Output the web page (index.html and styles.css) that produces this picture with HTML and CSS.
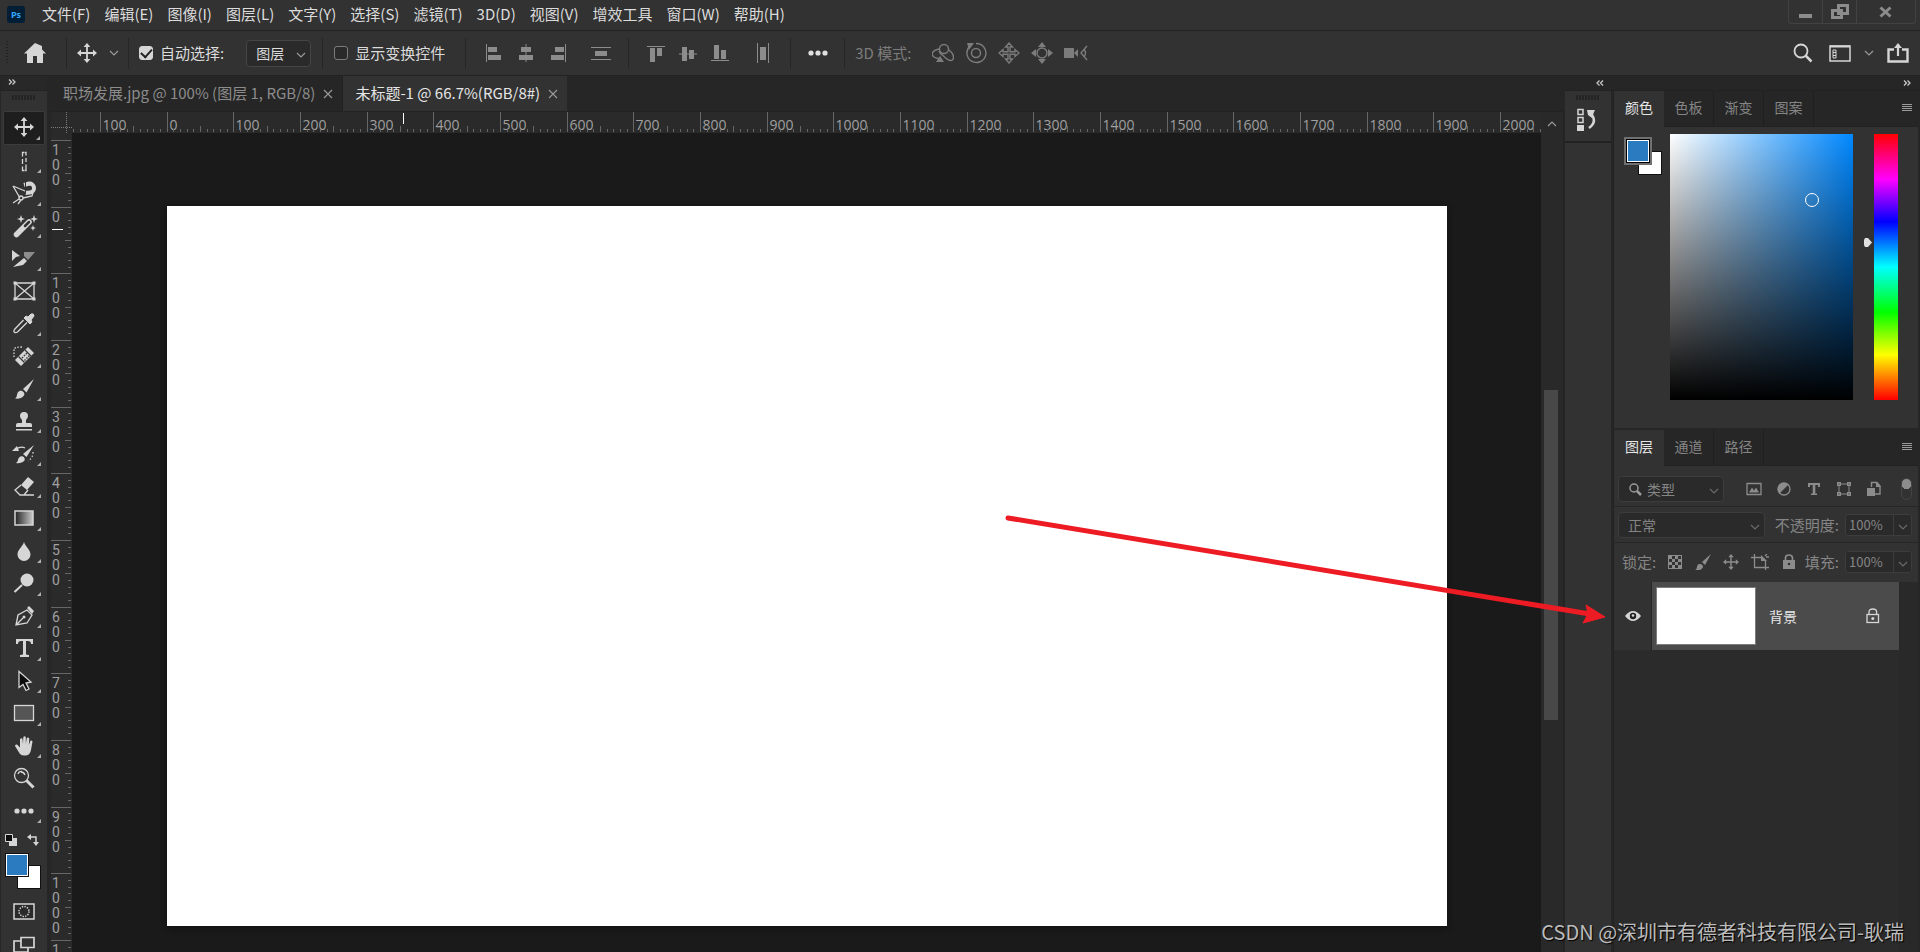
FILE: index.html
```html
<!DOCTYPE html>
<html lang="zh-CN">
<head>
<meta charset="utf-8">
<title>未标题-1</title>
<link rel="stylesheet" href="styles.css">
</head>
<body>
<svg class="defs" aria-hidden="true">
  <symbol id="i-chev" viewBox="0 0 10 10"><path d="M1 3l4 4 4-4" fill="none" stroke="currentColor" stroke-width="1.2"/></symbol>
  <symbol id="i-move" viewBox="0 0 20 20"><path d="M10 2v16M2 10h16" stroke="currentColor" stroke-width="1.8"/><path d="M10 0l3.400 4H6.600zM10 20l3.400-4H6.600zM0 10l4-3.400v6.800zM20 10l-4-3.400v6.800z" fill="currentColor"/></symbol>
  <symbol id="i-x" viewBox="0 0 10 10"><path d="M1 1l8 8M9 1l-8 8" stroke="currentColor" stroke-width="1.100"/></symbol>
  <symbol id="i-menu" viewBox="0 0 10 8"><path d="M0 .5h10M0 2.500h10M0 4.500h10M0 6.500h10" stroke="currentColor"/></symbol>
  <symbol id="i-dbl" viewBox="0 0 8 6"><path d="M1 .5L3.500 3 1 5.500M4.500.5L7 3 4.500 5.500" fill="none" stroke="currentColor" stroke-width="1.300"/></symbol>
  <symbol id="i-dots" viewBox="0 0 20 6"><g fill="currentColor"><circle cx="3" cy="3" r="2.600"/><circle cx="10" cy="3" r="2.600"/><circle cx="17" cy="3" r="2.600"/></g></symbol>
</svg>

<div class="app">
  <header class="menubar">
    <svg class="logo" viewBox="0 0 18 17"><rect width="18" height="17" rx="3" fill="#001e36"/><text x="9" y="12" text-anchor="middle" class="logo-text">Ps</text></svg>
    <nav class="menus">
      <button>文件(F)</button><button>编辑(E)</button><button>图像(I)</button><button>图层(L)</button><button>文字(Y)</button><button>选择(S)</button><button>滤镜(T)</button><button>3D(D)</button><button>视图(V)</button><button>增效工具</button><button>窗口(W)</button><button>帮助(H)</button>
    </nav>
    <div class="winctl">
      <button aria-label="最小化"><svg width="13" height="18"><rect y="11" width="13" height="4" fill="#8c8c8c"/></svg></button>
      <button aria-label="还原"><svg width="18" height="18"><path d="M7.500 2.500h9v8h-9zM1.500 7.500h9v7h-9z" fill="#323232" stroke="#8c8c8c" stroke-width="3"/></svg></button>
      <button class="wide" aria-label="关闭"><svg width="14" height="18"><path d="M1.500 4.500l10 9M11.500 4.500l-10 9" stroke="#8c8c8c" stroke-width="3"/></svg></button>
    </div>
  </header>

  <section class="options">
    <div class="grp g-home"><i class="grip-v"></i><button aria-label="主页"><svg width="22" height="20"><path d="M11 0L0 10.500h3V20h6v-7h4v7h6v-9.500h3L18 6.500V3z" fill="#d6d6d6"/></svg></button></div>
    <div class="grp g-tool"><svg class="ic20"><use href="#i-move"/></svg><svg class="ic10"><use href="#i-chev"/></svg></div>
    <div class="grp g-auto">
      <label class="check"><input type="checkbox" checked><span>自动选择:</span></label>
      <span class="sel sel-auto"><select aria-label="自动选择对象"><option>图层</option></select><svg class="ic10"><use href="#i-chev"/></svg></span>
    </div>
    <div class="grp g-show"><label class="check"><input type="checkbox"><span>显示变换控件</span></label></div>
    <div class="grp g-align">
      <button aria-label="左对齐"><svg class="ic20"><path d="M2.500 1v18" stroke="#8c8c8c"/><path d="M4 4h9v5H4zM4 12h13v5H4z"/></svg></button>
      <button aria-label="水平居中对齐"><svg class="ic20"><path d="M10 1v18" stroke="#8c8c8c"/><path d="M5 4h10v5H5zM3 12h14v5H3z"/></svg></button>
      <button aria-label="右对齐"><svg class="ic20"><path d="M17.500 1v18" stroke="#8c8c8c"/><path d="M7 4h9v5H7zM3 12h13v5H3z"/></svg></button>
      <button class="apart" aria-label="垂直分布"><svg class="ic20"><path d="M0 4.500h20M0 16.500h20" stroke="#8c8c8c"/><path d="M4 8h12v5H4z"/></svg></button>
    </div>
    <div class="grp g-align g-align2">
      <button aria-label="顶对齐"><svg class="ic20"><path d="M1 3.500h18" stroke="#8c8c8c"/><path d="M4 5h5v14H4zM11 5h5v8h-5z"/></svg></button>
      <button aria-label="垂直居中对齐"><svg class="ic20"><path d="M1 11h18" stroke="#8c8c8c"/><path d="M4 4h5v14H4zM11 7h5v9h-5z"/></svg></button>
      <button aria-label="底对齐"><svg class="ic20"><path d="M1 17.500h18" stroke="#8c8c8c"/><path d="M4 2h5v14H4zM11 7h5v9h-5z"/></svg></button>
      <button class="apart" aria-label="水平分布"><svg class="ic20"><path d="M4.500 0v20M15.500 0v20" stroke="#8c8c8c"/><path d="M7 4h6v13H7z"/></svg></button>
    </div>
    <div class="grp g-more"><button aria-label="更多"><svg width="20" height="6"><use href="#i-dots"/></svg></button></div>
    <div class="grp g-3d">
      <span class="mode">3D 模式:</span>
      <svg class="ic22 line"><circle cx="12" cy="7" r="4.500"/><path d="M7.500 7C1 8-2 12 2 15c1.500 1 3 1.500 5 1.500M16.500 7.500c5 4 6 8 4 10.500-2 1.500-6-1-9-4-3-2-4-3-4.500-5"/><path class="solid" d="M8 14l4 6H4z"/></svg>
      <svg class="ic22 line"><circle cx="11" cy="11" r="4.500"/><path d="M5 4a9.500 9.500 0 1 0 6-2.500"/><path class="solid" d="M2 1l7 0-5 7z"/></svg>
      <svg class="ic22 line"><path d="M11 1l3.500 4H12v4.800h5V7.500l4 3.500-4 3.500v-2.300h-5V17h2.500L11 21l-3.500-4H10v-4.800H5v2.300L1 11l4-3.500v2.300h5V5H7.500z"/></svg>
      <svg class="ic22 line"><circle cx="11" cy="11" r="5"/><path class="solid" d="M11 0l4 5H7zM11 22l4-5H7zM0 11l5-4v8zM22 11l-5-4v8z"/></svg>
      <svg class="ic24 line"><path class="solid" d="M0 6h10v10H0zM10 11l4-4v8z"/><path d="M23 4l-6 7 6 7M20 7q3 4 0 8"/></svg>
    </div>
    <div class="right-tools">
      <button aria-label="搜索"><svg width="20" height="20"><circle cx="8" cy="8" r="6.500" fill="none" stroke="#d6d6d6" stroke-width="1.800"/><path d="M12.500 12.500l6 6" stroke="#d6d6d6" stroke-width="2.500"/></svg></button>
      <button class="ws" aria-label="工作区"><svg width="22" height="18"><rect x="1" y="2" width="20" height="15" fill="none" stroke="#d6d6d6" stroke-width="1.500"/><path d="M1 2.500h20" stroke="#d6d6d6" stroke-width="2"/><path d="M4 6h3v8H4zM4 8.500h3M4 11.500h3" fill="none" stroke="#d6d6d6"/></svg></button>
      <svg class="ic10"><use href="#i-chev"/></svg>
      <button class="share" aria-label="共享"><svg width="22" height="20"><path d="M7 6.500H1.500v12h19v-12H15" fill="none" stroke="#d6d6d6" stroke-width="2.400"/><path d="M11 13V3" stroke="#d6d6d6" stroke-width="2.200"/><path d="M11 0l4 5H7z" fill="#d6d6d6"/></svg></button>
    </div>
  </section>

  <main class="work">
    <aside class="toolbox">
      <div class="dock-head left"><svg width="8" height="6"><use href="#i-dbl"/></svg></div>
      <div class="grip"></div>
      <div class="tools">
        <button class="on" aria-label="移动"><svg viewBox="0 0 40 32"><use href="#i-move" x="10" y="5" width="20" height="20"/></svg></button>
        <button aria-label="单列选框"><svg viewBox="0 0 40 32"><path d="M20 7.500h-1.500v4M18.500 14v5M18.500 21.500v4H20M20.500 7.500h1.500v3M22 13v4M22 19.500v6h-1.500" class="s"/></svg></button>
        <button aria-label="磁性套索"><svg viewBox="0 0 40 32"><path d="M9 8l7 12M9 8l12 5M19 20l9-2 1-4M15 21l-6 4M17 22l-3 4" class="s"/><circle cx="17" cy="20" r="2" class="s"/><path d="M20 7l5-1.500a4.500 4.500 0 0 1 1 9l-5 .5" fill="none" stroke="#d6d6d6" stroke-width="4"/><path d="M21.500 4v5M21.500 12.500v4" stroke="#323232"/></svg></button>
        <button aria-label="魔棒"><svg viewBox="0 0 40 32"><path d="M12.500 24.500L25 12" stroke="#d6d6d6" stroke-width="5.500" stroke-linecap="round"/><path d="M21 16l4-4" stroke="#323232" stroke-width="2.500" stroke-linecap="round"/><path d="M17 5l1 3 3 1-3 1-1 3-1-3-3-1 3-1zM30 5l1 3 3 1-3 1-1 3-1-3-3-1 3-1zM29 15l.8 2.200 2.200.8-2.200.8L29 21l-.8-2.200L26 18l2.200-.8z"/></svg></button>
        <button aria-label="切片选择"><svg viewBox="0 0 40 32"><path d="M8 7l8 6-4 1-4 4zM9 24l11-9 3 3-4 4z"/><path d="M20 9h11l-7 8-4-4z" fill="#8c8c8c"/></svg></button>
        <button aria-label="图框"><svg viewBox="0 0 40 32" class="nt"><path d="M11 8h19v16H11zM11 8l19 16M30 8L11 24" class="s"/><path d="M9.500 6.500h3v3h-3zM28.500 6.500h3v3h-3zM9.500 22.500h3v3h-3zM28.500 22.500h3v3h-3z"/></svg></button>
        <button aria-label="吸管"><svg viewBox="0 0 40 32"><path d="M23 14.500l-9 9q-1 1.500-3 1t-.5-3l9-9.500" class="s" stroke-width="2"/><path d="M20 10l2-2 2 1 3-3q3-1 3 2l-3 4 1 2-2 2z" stroke="#d6d6d6"/></svg></button>
        <button aria-label="修复画笔"><svg viewBox="0 0 40 32"><path d="M10 17V9q1-2 8-2" class="s" stroke-dasharray="1.500 1.500"/><path d="M14 23L27 10" stroke="#d6d6d6" stroke-width="8.500"/><path d="M14.500 16.500l6 6M21 10l6 6" stroke="#323232" stroke-width="1.200"/><path d="M18 18l5-5M20.500 20.500l5-5" stroke="#323232" stroke-width="1.500" stroke-dasharray="1.500 1.200"/></svg></button>
        <button aria-label="画笔"><svg viewBox="0 0 40 32"><path d="M30 6L19 16l3.500 3.500zM11 25.500c3-1.500 1-6 4.500-7.500 3-1 6 2 4.500 4.500-2 3-6 3.500-9 3z"/></svg></button>
        <button aria-label="仿制图章"><svg viewBox="0 0 40 32"><path d="M16 11a4 4 0 1 1 8 0q0 2-2 4v3h4q2 0 2 2v2H12v-2q0-2 2-2h4v-3q-2-2-2-4zM12 24h16v1.500H12z"/></svg></button>
        <button aria-label="历史记录画笔"><svg viewBox="0 0 40 32"><path d="M30 7L19 16l3.500 3zM12 25c3-1.500 1-5 4.500-6.500 3-1 5 2 4 4-2 2.500-5.500 3-8.500 2.500zM8 13l5-5 2 5z"/><path d="M12 11q5-3 9-1" class="s"/><path d="M29 14q0 6-5 9" class="s" stroke-dasharray="1.500 2"/></svg></button>
        <button aria-label="橡皮擦"><svg viewBox="0 0 40 32"><path d="M17 15l7-8 6 5-7 8z"/><path d="M17 15l-6 5 5 5h4l4-5M16 25h14" class="s"/></svg></button>
        <button aria-label="渐变"><svg viewBox="0 0 40 32"><defs><linearGradient id="gt"><stop stop-color="#222"/><stop offset="1" stop-color="#ccc"/></linearGradient></defs><rect x="11" y="9" width="18" height="14" fill="url(#gt)" stroke="#d6d6d6" stroke-width="1.500"/></svg></button>
        <button aria-label="模糊"><svg viewBox="0 0 40 32"><path d="M20 7c1 4 6.500 7.500 6.500 12.500a6.500 6.500 0 0 1-13 0C13.500 14.500 19 11 20 7z"/></svg></button>
        <button aria-label="减淡"><svg viewBox="0 0 40 32"><circle cx="23" cy="13" r="6.500"/><path d="M18 18l-7.500 7" stroke="#d6d6d6" stroke-width="2"/></svg></button>
        <button aria-label="钢笔"><svg viewBox="0 0 40 32"><path d="M12 25l2-10 9-5 5 5-5 8zM12 25l7-7" class="s" stroke-width="1.500"/><path d="M23 8l2-2 5 5-2 3z"/><circle cx="20" cy="17" r="1.500"/></svg></button>
        <button aria-label="文字"><svg viewBox="0 0 40 32"><path d="M12 7h17v5h-2q0-3-3-3h-2v13q0 1 3 1v2h-9v-2q3 0 3-1V9h-2q-3 0-3 3h-2z"/></svg></button>
        <button aria-label="路径选择"><svg viewBox="0 0 40 32"><path d="M15 6.500v16l4-3 3 6 3-1.500-3-6 5-1z" fill="#0c0c0c" stroke="#d6d6d6" stroke-width="1.300"/></svg></button>
        <button aria-label="矩形"><svg viewBox="0 0 40 32"><rect x="10.500" y="8.500" width="19" height="15" fill="#555" stroke="#d6d6d6" stroke-width="1.300"/></svg></button>
        <button aria-label="抓手"><svg viewBox="0 0 40 32"><path d="M16 24l-5-8q0-2 2-1.500l3 3V9q1.500-1.500 2.500 0l.5 5 .3-7q1.200-1.500 2.500 0v7l1-6q1.500-1.200 2.500.5l-.5 6.500 1.500-4q1.500-1 2.200.5L27 20q-1 5-5 5.500-4 .5-6-1.500z"/></svg></button>
        <button aria-label="缩放"><svg viewBox="0 0 40 32" class="nt"><circle cx="17.500" cy="13.500" r="7" class="s" stroke-width="1.700"/><path d="M14 12q1-3 4-2.500M17 10q3 0 4 3" class="s"/><path d="M22.500 18.500l7 7" stroke="#d6d6d6" stroke-width="3"/></svg></button>
        <button aria-label="编辑工具栏"><svg viewBox="0 0 40 32"><use href="#i-dots" x="10" y="13" width="20" height="6"/></svg></button>
      </div>
      <div class="toolfoot">
        <div class="mini">
          <svg width="12" height="12"><path d="M4 4h8v8H4z" fill="#d6d6d6"/><path d="M.5.5h7v7h-7z" fill="#0c0c0c" stroke="#d6d6d6"/></svg>
          <svg width="12" height="12"><path d="M3 3h6v6" fill="none" stroke="#d6d6d6" stroke-width="1.500"/><path d="M0 3l4-3v6zM9 12L6 8h6z" fill="#d6d6d6"/></svg>
        </div>
        <div class="swatches"><i class="back"></i><i class="fore"></i></div>
        <button aria-label="快速蒙版"><svg width="22" height="18"><rect x="1" y="1" width="20" height="15" fill="#2a2a2a" stroke="#d6d6d6" stroke-width="1.500"/><circle cx="11" cy="8.500" r="5" fill="none" stroke="#d6d6d6" stroke-width="1.500" stroke-dasharray="1.300 1.300"/></svg></button>
        <button aria-label="屏幕模式"><svg width="22" height="18"><path d="M8 5H1v11h14v-4M8 1.500h13v10H8z" fill="none" stroke="#d6d6d6" stroke-width="1.700"/></svg></button>
      </div>
    </aside>

    <section class="document">
      <div class="doctabs">
        <div class="doctab t1"><a href="#">职场发展.jpg @ 100% (图层 1, RGB/8)</a><button aria-label="关闭标签"><svg class="ic10"><use href="#i-x"/></svg></button></div>
        <div class="doctab on"><a href="#">未标题-1 @ 66.7%(RGB/8#)</a><button aria-label="关闭标签"><svg class="ic10"><use href="#i-x"/></svg></button></div>
      </div>
      <div class="view">
        <div class="corner"></div>
        <svg class="ruler-h" id="ruler-h"></svg>
        <svg class="ruler-v" id="ruler-v"></svg>
        <div class="stage"><div class="artboard"></div></div>
        <div class="scroll">
          <svg class="ic10 up"><use href="#i-chev"/></svg>
          <i class="thumb"></i>
        </div>
      </div>
    </section>

    <div class="docks">
      <div class="dockbar">
        <svg class="flip" width="8" height="6"><use href="#i-dbl"/></svg>
        <svg width="8" height="6"><use href="#i-dbl"/></svg>
      </div>
      <div class="dockrow">
        <aside class="strip">
          <div class="grip"></div>
          <button aria-label="历史记录"><svg width="20" height="23"><path d="M1 1.500h5v5H1zM1 9.500h5v5H1z" fill="none" stroke="#d6d6d6" stroke-width="1.500"/><path d="M0 17h7v6H0z" fill="#d6d6d6"/><path d="M12 20q8-6 3-13" fill="none" stroke="#d6d6d6" stroke-width="2.500"/><path d="M10 2h8l-1 2-2 6-4-3z" fill="#d6d6d6"/></svg></button>
        </aside>
        <aside class="panels">
          <section class="panel">
            <div class="ptabs"><button class="on">颜色</button><button>色板</button><button>渐变</button><button>图案</button><svg class="pmenu"><use href="#i-menu"/></svg></div>
            <div class="color">
              <div class="cswatch"><i class="back"></i><i class="fore"></i></div>
              <div class="field"><i class="ring"></i></div>
              <div class="hue"><svg class="mark" width="9" height="9"><path d="M1 0h3l4 4.500L4 9H1L0 7V2z" fill="#e0e0e0"/></svg></div>
            </div>
          </section>
          <section class="panel layers">
            <div class="ptabs"><button class="on">图层</button><button>通道</button><button>路径</button><svg class="pmenu"><use href="#i-menu"/></svg></div>
            <div class="lrow r-filter">
              <span class="sel sel-kind"><svg class="lens" width="13" height="13"><circle cx="5" cy="5" r="4" fill="none" stroke="#9a9a9a" stroke-width="1.500"/><path d="M8 8l4 4" stroke="#9a9a9a" stroke-width="2.500"/></svg><select aria-label="筛选类型"><option>类型</option></select><svg class="ic10"><use href="#i-chev"/></svg></span>
              <div class="filters">
                <svg class="ic16"><path d="M1 2.500h14v11H1z" fill="none" stroke="#8c8c8c" stroke-width="1.300"/><path d="M3 11.500l3-5 2 3 2-3 3 5z"/></svg>
                <svg class="ic16"><circle cx="8" cy="8" r="6" fill="none" stroke="#8c8c8c" stroke-width="1.300"/><path d="M12.500 3.500l-9 9A6 6 0 0 1 12.500 3.500z"/></svg>
                <svg class="ic16"><path d="M2 2h12v4h-2V4H9.300v8.500H11V14H5v-1.500h1.700V4H4v2H2z"/></svg>
                <svg class="ic16"><path d="M3 3h10v10H3z" fill="none" stroke="#8c8c8c"/><path d="M1 1h4v4H1zM11 1h4v4h-4zM1 11h4v4H1zM11 11h4v4h-4z"/><path d="M2.500 2.500h1v1h-1zM12.500 2.500h1v1h-1zM2.500 12.500h1v1h-1zM12.500 12.500h1v1h-1z" fill="#323232"/></svg>
                <svg class="ic16"><path d="M5.500 6V1.500H11L14 5v8H9" fill="none" stroke="#8c8c8c" stroke-width="1.400"/><path d="M10 1v5h5zM1 7h8v8H1z"/></svg>
              </div>
              <input class="toggle" type="checkbox" role="switch" aria-label="打开滤镜">
            </div>
            <div class="lrow r-blend">
              <span class="sel sel-blend"><select aria-label="混合模式"><option>正常</option></select><svg class="ic10"><use href="#i-chev"/></svg></span>
              <label for="op">不透明度:</label>
              <span class="num"><input id="op" value="100%"><button aria-label="不透明度滑块"><svg class="ic10"><use href="#i-chev"/></svg></button></span>
            </div>
            <div class="lrow r-lock">
              <span>锁定:</span>
              <div class="locks">
                <svg class="ic16"><path d="M1 1h14v14H1z"/><path d="M5 2h3v3H5zM11 2h3v3h-3zM2 5h3v3H2zM8 5h3v3H8zM5 8h3v3H5zM11 8h3v3h-3zM2 11h3v3H2zM8 11h3v3H8z" fill="#323232"/></svg>
                <svg class="ic16"><path d="M16 0L7 8l3 3zM0 16c3-1 1-5 4-6 3-.5 5 2 3.500 4S3 17 0 16z"/></svg>
                <svg class="ic16 mv"><use href="#i-move"/></svg>
                <svg class="ic18"><path d="M3.500 0v13.500H18M0 3.500h11l3.500 3V16M15 3h3M16 0l-2 2" fill="none" stroke="#8c8c8c" stroke-width="1.300"/><path d="M3 14.500v1.500M10 1l6 6h-6z"/></svg>
                <svg class="ic16 lk"><path d="M2 6h12v9H2z"/><path d="M4.500 7V4q0-3 3.500-3t3.500 3v3" fill="none" stroke="#8c8c8c" stroke-width="1.700"/><circle cx="8" cy="10" r="1.300" fill="#323232"/></svg>
              </div>
              <label for="fl">填充:</label>
              <span class="num"><input id="fl" value="100%"><button aria-label="填充滑块"><svg class="ic10"><use href="#i-chev"/></svg></button></span>
            </div>
            <div class="llist">
              <div class="layer">
                <button class="eye" aria-label="可见性"><svg width="16" height="10"><path d="M0 5q8-10 16 0-8 10-16 0z" fill="#d6d6d6"/><circle cx="8" cy="5" r="3.200" fill="#222"/><circle cx="8" cy="4.500" r="1.300" fill="#d6d6d6"/></svg></button>
                <div class="linfo"><i class="lthumb"></i><span>背景</span><svg width="14" height="16"><rect x="1" y="6.500" width="11.500" height="8" fill="none" stroke="#d6d6d6" stroke-width="1.300"/><path d="M3 6.500V4q0-3 3.800-3t3.800 3v2.500" fill="none" stroke="#d6d6d6" stroke-width="1.300"/><circle cx="6.800" cy="10.500" r="1.500" fill="#d6d6d6"/></svg></div>
              </div>
              <div class="lscroll"></div>
            </div>
          </section>
        </aside>
      </div>
    </div>
  </main>

  <svg class="arrow" width="606" height="112"><path d="M3 5L585 101" stroke="#ed1c24" stroke-width="5" stroke-linecap="round"/><path d="M600 104l-22 6 5-9-2-9z" fill="#ed1c24" stroke="#ed1c24"/></svg>
  <p class="credit">CSDN @深圳市有德者科技有限公司-耿瑞</p>
</div>
<script src="rulers.js"></script>
</body>
</html>
```

FILE: rulers.js
```js
// Draws both rulers: 100 document pixels are 200/3 screen pixels at 66.7% zoom.
const STEP = 200 / 30;

function line(x1, y1, x2, y2, cls) {
  return `<path class="${cls}" d="M${x1} ${y1}L${x2} ${y2}"/>`;
}

function drawHorizontal(el, origin) {
  const width = el.clientWidth;
  let out = '';
  for (let n = -14; origin + n * STEP < width; n++) {
    const x = Math.floor(origin + n * STEP) + 0.5;
    const top = n % 10 === 0 ? 0 : n % 5 === 0 ? 14 : 17;
    out += line(x, top, x, 20, 'tick');
    if (n % 10 === 0) out += `<text x="${x + 2}" y="18">${Math.abs(n * 10)}</text>`;
  }
  el.innerHTML = out + line(331.5, 1, 331.5, 12, 'cursor');
}

function drawVertical(el, origin) {
  const height = el.clientHeight;
  let out = '';
  for (let n = -10; origin + n * STEP < height; n++) {
    const y = Math.floor(origin + n * STEP) + 0.5;
    const left = n % 10 === 0 ? 0 : n % 5 === 0 ? 14 : 17;
    out += line(left, y, 20, y, 'tick');
    if (n % 10 === 0) {
      [...String(Math.abs(n * 10))].forEach((d, i) => {
        const base = y + 14 + i * 15;
        if (base - 10 < height) out += `<text x="1" y="${base}">${d}</text>`;
      });
    }
  }
  el.innerHTML = out + line(1, 96.5, 12, 96.5, 'cursor');
}

function draw() {
  drawHorizontal(document.getElementById('ruler-h'), 95);
  drawVertical(document.getElementById('ruler-v'), 74);
}

draw();
window.addEventListener('resize', draw);
```

FILE: styles.css
```css
* { box-sizing: border-box; }
body {
  margin: 0;
  background: #1a1a1a;
  color: #dcdcdc;
  font: 14px/20px "Noto Sans CJK SC", sans-serif;
}
button, select, input { font: inherit; color: inherit; margin: 0; padding: 0; border: 0; background: none; }
button { display: flex; align-items: center; justify-content: center; }
a { color: inherit; text-decoration: none; }
svg { display: block; flex: none; }
i { display: block; }
.defs { width: 0; height: 0; position: absolute; }
.ic10 { width: 10px; height: 10px; color: #9a9a9a; }
.ic16 { width: 16px; height: 16px; fill: #8c8c8c; color: #8c8c8c; }
.ic18 { width: 18px; height: 16px; fill: #8c8c8c; }
.ic20 { width: 20px; height: 20px; fill: #8c8c8c; color: #d6d6d6; }
.ic22 { width: 22px; height: 22px; }
.ic24 { width: 24px; height: 22px; }
.line { fill: none; stroke: #7c7c7c; stroke-width: 1.4; }
.solid { fill: #7c7c7c; stroke: none; }

.app { position: relative; height: 100vh; display: flex; flex-direction: column; overflow: hidden; }

/* menu bar */
.menubar { height: 31px; flex: none; display: flex; background: #323232; border-bottom: 1px solid #222; padding: 0 4px 0 7px; }
.logo { width: 18px; height: 17px; margin-top: 6px; }
.logo-text { font: bold 9px "Open Sans", sans-serif; fill: #31a8ff; }
.menus { display: flex; gap: 14px; padding-left: 17px; font-size: 15px; height: 28px; flex: 1; }
.menus button { white-space: nowrap; }
.winctl { display: flex; height: 24px; border: 1px solid #424242; border-top: 0; border-radius: 0 0 4px 4px; }
.winctl button { width: 34px; border-right: 1px solid #424242; }
.winctl .wide { width: 58px; border-right: 0; }

/* options bar */
.options { height: 45px; flex: none; display: flex; align-items: center; background: #323232; border-bottom: 1px solid #222; font-size: 15px; }
.grp { display: flex; align-items: center; height: 31px; border-right: 1px solid #262626; }
.grip-v { width: 2px; height: 24px; margin: 0 16px 0 6px; background: repeating-linear-gradient(#222 0 1px, transparent 1px 3px); }
.g-home { padding-right: 20px; }
.g-tool { padding: 0 9px 0 10px; gap: 12px; }
.g-auto { padding: 0 11px 0 10px; gap: 22px; }
.g-show { padding: 0 20px 0 11px; }
.g-align { padding: 0 17px 0 18px; gap: 12px; }
.g-align2 { padding-left: 17px; }
.apart { margin-left: 11px; }
.g-more { padding: 0 16px 0 17px; color: #e0e0e0; }
.g-3d { border: 0; padding-left: 10px; gap: 11px; color: #7c7c7c; }
.mode { margin-right: 10px; }
.check { display: flex; align-items: center; gap: 7px; }
.check input { appearance: none; width: 14px; height: 14px; border: 1px solid #7c7c7c; border-radius: 3px; background: #2a2a2a; }
.check input:checked { background: #d6d6d6; border-color: #d6d6d6; display: grid; place-items: center; }
.check input:checked::after { content: ""; width: 9px; height: 5px; border: solid #222; border-width: 0 0 2px 2px; transform: rotate(-48deg) translate(1px, -1px); }
.sel { display: grid; align-items: center; background: #2a2a2a; border: 1px solid #454545; border-radius: 4px; font-size: 14px; }
.sel > * { grid-area: 1 / 1; }
.sel select { appearance: none; width: 100%; padding-left: 9px; }
.sel option { background: #2a2a2a; }
.sel .ic10 { justify-self: end; margin: 4px 4px 0 0; pointer-events: none; }
.sel-auto { width: 65px; height: 27px; }
.right-tools { margin-left: auto; display: flex; align-items: center; padding-right: 11px; gap: 13px; }
.ws { margin-left: 3px; }

/* work area */
.work { flex: 1; min-height: 0; display: flex; background: #262626; }
.toolbox { width: 48px; flex: none; background: #323232; border-left: 1px solid #262626; border-right: 1px solid #262626; display: flex; flex-direction: column; }
.dock-head { height: 15px; background: #282828; border-bottom: 1px solid #222; color: #c8c8c8; padding: 3px 0 0 7px; }
.grip { width: 24px; height: 5px; margin: 4px auto 0; background: repeating-linear-gradient(90deg, #242424 0 2px, transparent 2px 3px); }
.toolbox .grip { margin: 4px 0 11px 11px; }
.tools { flex: 1; min-height: 0; display: grid; grid-auto-rows: 1fr; padding: 0 4px 0 2px; color: #d6d6d6; }
.tools button { position: relative; }
.tools button::after { content: ""; position: absolute; right: 4px; bottom: 4px; border: 2px solid; border-color: transparent #b0b0b0 #b0b0b0 transparent; }
.tools button:has(.nt)::after { display: none; }
.tools svg { width: 40px; height: 32px; fill: #d6d6d6; }
.tools .s { fill: none; stroke: #d6d6d6; stroke-width: 1.3; }
.tools .on { background: #1e1e1e; border: 1px solid #3c3c3c; border-radius: 2px; }
.toolfoot { height: 125px; flex: none; display: flex; flex-direction: column; padding: 7px 5px 0 4px; }
.toolfoot > * { flex: none; }
.mini { display: flex; gap: 10px; }
.swatches { position: relative; width: 36px; height: 36px; margin: 7px 0 14px; }
.fore, .back { position: absolute; width: 24px; height: 24px; border: 1px solid #111; }
.fore { left: 0; top: 0; background: #2b7bc1; box-shadow: inset 0 0 0 1px #fff; }
.back { right: 0; bottom: 0; background: #fff; }
.toolfoot button { align-self: flex-start; margin: 0 0 15px 8px; }

.document { flex: 1; min-width: 0; margin-left: 3px; display: flex; flex-direction: column; }
.doctabs { height: 36px; flex: none; display: flex; border-bottom: 1px solid #222; white-space: nowrap; font-size: 15px; }
.doctab { display: flex; align-items: center; gap: 8px; padding: 0 9px 0 12px; color: #8c8c8c; }
.doctab.on { background: #323232; color: #e6e6e6; border-left: 1px solid #222; }
.doctab a { padding-bottom: 2px; }
.view { flex: 1; min-height: 0; display: grid; grid-template: 21px minmax(0, 1fr) / 21px minmax(0, 1fr) 23px; }
.corner { background: #2a2a2a; position: relative; }
.corner::before, .corner::after { content: ""; position: absolute; }
.corner::before { left: 15px; top: 0; height: 21px; border-left: 1px dotted #7c7c7c; }
.corner::after { top: 15px; left: 0; width: 21px; border-top: 1px dotted #7c7c7c; }
.ruler-h, .ruler-v { width: 100%; height: 100%; overflow: hidden; background: #2a2a2a; font: 14px "Open Sans", sans-serif; fill: #a0a0a0; }
.ruler-v { grid-area: 2 / 1; font-family: Roboto, sans-serif; }
.tick { stroke: #666; }
.cursor { stroke: #fff; }
.stage { grid-area: 2 / 2; background: #1a1a1a; padding: 73px 94px 0 95px; overflow: hidden; }
.artboard { background: #fff; aspect-ratio: 16 / 9; box-shadow: 0 2px 5px #111; }
.scroll { grid-area: 1 / 3 / 3 / 4; background: #292929; border-right: 1px solid #222; padding: 7px 5px 0 3px; display: flex; flex-direction: column; }
.up { transform: rotate(180deg); margin-left: 3px; }
.thumb { flex: 1; margin: 261px 0 232px; background: #484848; }

/* docks */
.docks { width: 355px; flex: none; margin-left: 1px; display: flex; flex-direction: column; }
.dockbar { height: 15px; flex: none; display: flex; justify-content: space-between; align-items: center; padding: 0 9px 0 31px; color: #c8c8c8; border-bottom: 1px solid #222; }
.flip { transform: rotate(180deg); }
.dockrow { flex: 1; min-height: 0; display: flex; gap: 2px; padding-right: 2px; }
.strip { width: 46px; flex: none; background: #323232; }
.strip button { padding: 8px 0 10px 12px; width: 100%; justify-content: flex-start; border-bottom: 2px solid #222; }
.panels { flex: 1; min-width: 0; display: flex; flex-direction: column; gap: 2px; }
.panel { background: #323232; border-left: 1px solid #222; }
.ptabs { height: 36px; display: flex; background: #262626; color: #858585; border-bottom: 1px solid #222; }
.ptabs button { width: 50px; border-right: 1px solid #1f1f1f; padding-bottom: 4px; }
.ptabs .on { background: #323232; color: #e6e6e6; height: 36px; border: 0; padding-bottom: 5px; }
.pmenu { width: 10px; height: 8px; margin: 13px 6px 0 auto; color: #9a9a9a; }
.color { display: flex; padding: 7px 20px 28px 10px; }
.cswatch { position: relative; width: 38px; height: 38px; margin: 3px 8px 0 0; flex: none; }
.cswatch .fore { left: 2px; top: 2px; border-color: #000; box-shadow: inset 0 0 0 1px #fff, 0 0 0 2px #707070; }
.field { position: relative; flex: 1; height: 266px; background: linear-gradient(transparent, #000), linear-gradient(90deg, #fff, #0088ff); }
.ring { position: absolute; left: 74%; top: 22%; width: 14px; height: 14px; border: 1px solid #fff; border-radius: 50%; }
.hue { position: relative; width: 24px; margin-left: 21px; background: linear-gradient(#f00, #f0f 17%, #00f 33%, #0ff 50%, #0f0 67%, #ff0 83%, #f00); }
.mark { position: absolute; left: -10px; top: 39%; }

.layers { flex: 1; display: flex; flex-direction: column; }
.lrow { display: flex; align-items: center; height: 36px; flex: none; color: #858585; border-bottom: 1px solid #262626; padding: 0 6px 0 4px; }
.r-filter { height: 41px; padding-top: 6px; }
.r-lock { height: 39px; border: 0; padding: 0 6px 2px 8px; font-size: 15px; }
.lrow .sel { border-color: #3c3c3c; }
.sel-kind { width: 106px; height: 26px; }
.sel-kind select { padding-left: 28px; }
.lens { margin-left: 10px; }
.sel-blend { width: 147px; height: 26px; }
.lrow .sel .ic10, .num .ic10 { color: #6a6a6a; }
.num .ic10 { margin-top: 4px; }
.filters { display: flex; gap: 14px; margin-left: 22px; }
.toggle { appearance: none; width: 11px; height: 22px; border: 1px solid #454545; border-radius: 6px; margin-left: auto; background: radial-gradient(circle at 50% 5px, #8c8c8c 5px, transparent 5px); }
.lrow label { margin-left: auto; padding-right: 6px; font-size: 15px; }
.num { display: flex; width: 67px; height: 22px; background: #2a2a2a; border: 1px solid #3c3c3c; border-radius: 3px; font-size: 13px; }
.num input { width: 48px; padding-left: 3px; border-right: 1px solid #3c3c3c; }
.num button { flex: 1; }
.locks { display: flex; gap: 12px; margin-left: 11px; }
.llist { flex: 1; display: flex; background: #2b2b2b; }
.layer { flex: 1; height: 68px; display: flex; background: #323232; }
.lscroll { width: 19px; background: #292929; }
.eye { width: 37px; }
.linfo { flex: 1; display: flex; align-items: center; background: #4b4b4b; border-left: 1px solid #262626; padding: 0 19px 0 5px; color: #e6e6e6; }
.lthumb { width: 98px; height: 56px; background: #fff; outline: 1px solid #7c7c7c; margin-right: 14px; }
.linfo svg { margin-left: auto; }

.arrow { position: absolute; left: 1005px; top: 513px; }
.credit { position: absolute; right: 16px; bottom: 7px; margin: 0; font-size: 20px; line-height: 26px; color: #bcbcbc; text-shadow: 1px 1px 1px #000; }
```
